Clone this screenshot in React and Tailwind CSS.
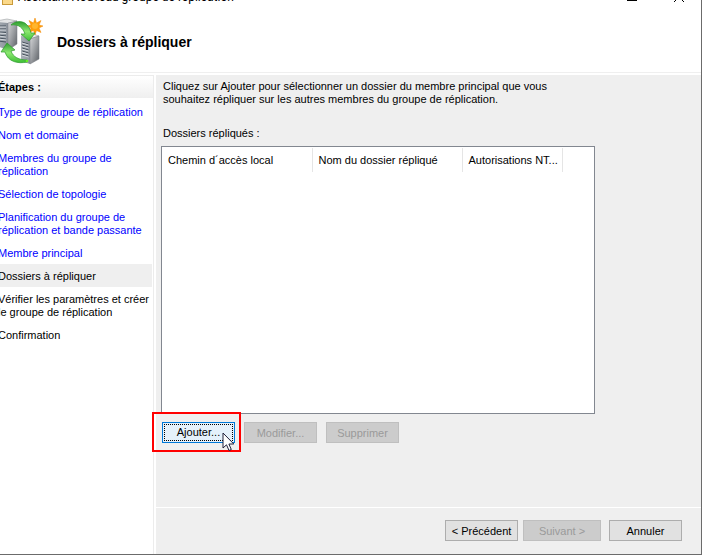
import React from "react";

const steps = [
  { lines: ["Type de groupe de réplication"], state: "done" },
  { lines: ["Nom et domaine"], state: "done" },
  { lines: ["Membres du groupe de", "réplication"], state: "done" },
  { lines: ["Sélection de topologie"], state: "done" },
  { lines: ["Planification du groupe de", "réplication et bande passante"], state: "done" },
  { lines: ["Membre principal"], state: "done" },
  { lines: ["Dossiers à répliquer"], state: "current" },
  { lines: ["Vérifier les paramètres et créer", "le groupe de réplication"], state: "todo" },
  { lines: ["Confirmation"], state: "todo" },
];

const stepStyles = {
  done: "text-[#0000ff]",
  current: "bg-[#efefef] text-black",
  todo: "text-black",
};

function ServersIcon() {
  return (
    <svg width="44" height="48" viewBox="0 0 44 48" className="shrink-0" aria-hidden="true">
      <defs>
        <linearGradient id="side" x1="0" y1="0" x2="1" y2="1">
          <stop offset="0" stopColor="#d6d7d9" />
          <stop offset="0.5" stopColor="#9a9da1" />
          <stop offset="1" stopColor="#5b5f64" />
        </linearGradient>
        <linearGradient id="front" x1="0" y1="0" x2="1" y2="0">
          <stop offset="0" stopColor="#a9afb6" />
          <stop offset="1" stopColor="#8b929b" />
        </linearGradient>
        <linearGradient id="green" x1="0" y1="0" x2="0" y2="1">
          <stop offset="0" stopColor="#2f9e30" />
          <stop offset="0.5" stopColor="#8ce870" />
          <stop offset="1" stopColor="#3dbd35" />
        </linearGradient>
      </defs>
      <path d="M-4 4 L7 2 L17 4 L8 7 L-4 6 Z" fill="#e4e5e6" stroke="#8f9295" strokeWidth="0.5" />
      <path d="M-4 5 L8 6 L8 33 L-4 29 Z" fill="url(#front)" />
      <path d="M8 6 L17 4 L17 27 L8 33 Z" fill="url(#side)" stroke="#777b80" strokeWidth="0.5" />
      <path d="M-2 9 L6 9 M-2 12 L6 12 M-2 15 L6 15.500 M-2 18 L6 19 M-2 21 L6 22 M-2 24 L6 25" stroke="#46515d" strokeWidth="1" />
      <path d="M-2 10 L6 10 M-2 13 L6 13 M-2 16 L6 16.500 M-2 19 L6 20 M-2 22 L6 23" stroke="#e1e5e9" strokeWidth="0.8" />
      <path d="M21 19 L30 16 L39 19 L30 22 Z" fill="#e6e6e7" stroke="#8b8d90" strokeWidth="0.5" />
      <path d="M21 19 L30 22 L30 47 L21 44 Z" fill="url(#front)" />
      <path d="M30 22 L39 19 L39 42 L30 47 Z" fill="url(#side)" stroke="#777b80" strokeWidth="0.5" />
      <path d="M22 25 L28.500 27 M22 28 L28.500 30 M22 31 L28.500 33 M22 34 L28.500 36 M22 37 L28.500 39" stroke="#434d58" strokeWidth="1" />
      <path d="M22 26 L28.500 28 M22 29 L28.500 31 M22 32 L28.500 34 M22 35 L28.500 37 M22 38 L28.500 40" stroke="#e4e8eb" strokeWidth="0.8" />
      <path
        d="M35 1 L36.500 6 L41 3.500 L39 8 L43 9 L39 11 L41 15.500 L36.500 13.500 L35 18 L33.500 13.500 L29 15.500 L31 11 L27 9 L31 8 L29 3.500 L33.500 6 Z"
        fill="#ff9d0a"
        stroke="#f18700"
        strokeWidth="0.5"
      />
      <circle cx="35" cy="9" r="3" fill="#ffb52e" />
      <path
        d="M11 8 C15 4 23 3 27 8 C30 11 30 13 31 16 L35 16 L29 24 L21 17 L25 17 C23 11 19 7 11 8 Z"
        fill="url(#green)"
        stroke="#2a9a2a"
        strokeWidth="0.7"
      />
      <path
        d="M27 45 C18 47 8 45 5 35 L1 35 L7 26 L15 33 L11 34 C13 40 19 43 27 43 Z"
        fill="url(#green)"
        stroke="#2a9a2a"
        strokeWidth="0.7"
      />
      <circle cx="27" cy="44" r="1.300" fill="#66ee22" />
    </svg>
  );
}

function Cursor() {
  return (
    <svg width="13" height="20" viewBox="0 0 13 20" className="pointer-events-none absolute left-[68px] top-[18px]" aria-hidden="true">
      <path
        d="M1 1 L1 16 L4.500 12.800 L7 18.500 L9.300 17.500 L6.900 12 L11.800 12 Z"
        fill="#fff"
        stroke="#20203a"
        strokeWidth="1"
      />
    </svg>
  );
}

function Button({ children, width = "w-[73px]", disabled = false }) {
  return (
    <button
      type="button"
      disabled={disabled}
      className={`h-[21px] shrink-0 whitespace-nowrap border pt-px text-center leading-[13px] ${width} ${
        disabled ? "border-[#bfbfbf] bg-[#cccccc] text-[#9a9a9a]" : "border-[#adadad] bg-[#e1e1e1] text-black"
      }`}
    >
      {children}
    </button>
  );
}

export default function App() {
  return (
    <div className="flex h-screen flex-col overflow-hidden border-b border-r border-[#6b6b6b] bg-white font-['Liberation_Sans',Arial,sans-serif] text-[11px] leading-[13px] text-black">
      <div className="flex h-[5px] shrink-0 items-end pl-[2px]">
        <span className="h-[14px] w-[11px] shrink-0 border border-[#c99a3a] bg-[#fbd98a]" />
        <span className="ml-[5px] flex-1 font-[Roboto,sans-serif] text-[12px] leading-[16px]">
          Assistant Nouveau groupe de réplication
        </span>
        <span className="mb-1 mr-[37px] h-[10px] w-[10px] border-b border-black" />
        <svg width="10" height="10" viewBox="0 0 10 10" className="mb-[3px] mr-[17px]" aria-hidden="true">
          <path d="M0 0 L10 10 M10 0 L0 10" stroke="#000" />
        </svg>
      </div>
      <header className="flex h-[68px] shrink-0 items-center border-b border-[#efefef] pt-1">
        <ServersIcon />
        <h1 className="ml-[13px] mt-[2px] text-[14px] font-bold leading-4">Dossiers à répliquer</h1>
      </header>

      <div className="flex min-h-0 flex-1 pt-[2px]">
        <nav className="flex w-[154px] shrink-0 flex-col border-r border-t border-[#ececec]" aria-labelledby="steps">
          <h2 id="steps" className="h-[22px] bg-linear-to-b from-white to-[#efefef] pt-[5px] font-bold">
            <span className="-ml-[2px]">Étapes :</span>
          </h2>
          <ol className="mr-px mt-[2px]">
            {steps.map((step) => (
              <li key={step.lines[0]} className={`pb-1 pt-[6px] ${stepStyles[step.state]}`}>
                <div className="-ml-[2px] whitespace-nowrap">
                  {step.state === "done" ? (
                    <a href="#" className="block">
                      {step.lines.map((line) => (
                        <span key={line} className="block">{line}</span>
                      ))}
                    </a>
                  ) : (
                    step.lines.map((line) => (
                      <span key={line} className="block">{line}</span>
                    ))
                  )}
                </div>
              </li>
            ))}
          </ol>
        </nav>

        <div className="ml-[2px] flex min-w-0 flex-1 flex-col bg-[#efefef]">
          <main className="flex min-h-0 flex-1 flex-col pb-16 pl-[5px] pr-[106px] pt-[5px]">
            <p className="pl-[2px]">
              Cliquez sur Ajouter pour sélectionner un dossier du membre principal que vous
              <br />
              souhaitez répliquer sur les autres membres du groupe de réplication.
            </p>
            <h3 id="folders" className="mb-[6px] mt-[21px] pl-[2px]">Dossiers répliqués :</h3>
            <div className="min-h-0 flex-1 border border-[#828790] bg-white pt-px">
              <table className="table-fixed border-collapse" aria-labelledby="folders">
                <colgroup>
                  <col className="w-[150px]" />
                  <col className="w-[150px]" />
                  <col className="w-[100px]" />
                </colgroup>
                <thead>
                  <tr className="h-6 text-left">
                    {["Chemin d´accès local", "Nom du dossier répliqué", "Autorisations NT..."].map((title) => (
                      <th key={title} scope="col" className="whitespace-nowrap border-r border-[#e5e5e5] p-0 pl-[6px] font-normal">
                        {title}
                      </th>
                    ))}
                  </tr>
                </thead>
              </table>
            </div>
            <div className="mt-2 flex gap-[9px] pl-px">
              <div className="relative">
                <div className="pointer-events-none absolute -left-[10px] -top-[10px] h-[40px] w-[89px] border-2 border-[#ff0000]">
                  <Cursor />
                </div>
                <button type="button" className="h-[21px] w-[73px] border border-[#0078d7] bg-[#e5f1fb] p-px">
                  <span className="block h-full border border-dotted border-black leading-[15px]">Ajouter...</span>
                </button>
              </div>
              <Button disabled>Modifier...</Button>
              <Button disabled>Supprimer</Button>
            </div>
          </main>

          <footer className="flex shrink-0 justify-end border-t border-white pb-[13px] pr-[19px] pt-3">
            <Button>&lt; Précédent</Button>
            <div className="ml-[5px] mr-2 flex">
              <Button width="w-[78px]" disabled>Suivant &gt;</Button>
            </div>
            <Button>Annuler</Button>
          </footer>
        </div>
      </div>
    </div>
  );
}
